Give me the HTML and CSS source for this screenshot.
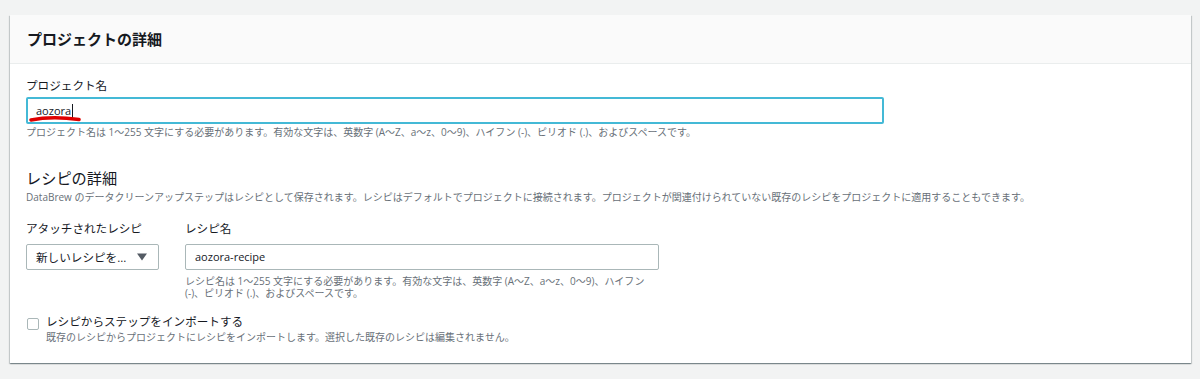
FILE: index.html
```html
<!DOCTYPE html>
<html lang="ja">
<head>
<meta charset="utf-8">
<link rel="stylesheet" href="styles.css">
</head>
<body>
<div class="page">
  <div class="card">
    <div class="card-header">
      <h2 class="card-title">プロジェクトの詳細</h2>
    </div>
    <div class="card-body">
      <div class="field">
        <label class="label">プロジェクト名</label>
        <div class="input input-focus input-wide">
          <span class="input-text">aozora</span><span class="caret"></span>
          <svg class="scribble" width="56" height="8" viewBox="0 0 56 8"><path d="M2 5 C 14 2.5, 32 2, 50 4.5" stroke="#e00000" stroke-width="3.5" fill="none" stroke-linecap="round"/></svg>
        </div>
        <p class="hint">プロジェクト名は 1～255 文字にする必要があります。有効な文字は、英数字 (A～Z、a～z、0～9)、ハイフン (-)、ピリオド (.)、およびスペースです。</p>
      </div>

      <h3 class="section-title">レシピの詳細</h3>
      <p class="desc">DataBrew のデータクリーンアップステップはレシピとして保存されます。レシピはデフォルトでプロジェクトに接続されます。プロジェクトが関連付けられていない既存のレシピをプロジェクトに適用することもできます。</p>

      <div class="row">
        <div class="col-select">
          <label class="label label-spaced">アタッチされたレシピ</label>
          <div class="select">
            <span>新しいレシピを...</span>
            <svg class="arrow" width="10" height="8" viewBox="0 0 10 8"><path d="M0 0.5 H10 L5 7.5 Z" fill="#545b64"/></svg>
          </div>
        </div>
        <div class="col-name">
          <label class="label label-spaced">レシピ名</label>
          <div class="input input-recipe"><span class="input-text">aozora-recipe</span></div>
          <p class="hint hint-narrow">レシピ名は 1～255 文字にする必要があります。有効な文字は、英数字 (A～Z、a～z、0～9)、ハイフン (-)、ピリオド (.)、およびスペースです。</p>
        </div>
      </div>

      <div class="check-row">
        <span class="checkbox"></span>
        <div class="check-text">
          <div class="check-label">レシピからステップをインポートする</div>
          <div class="check-desc">既存のレシピからプロジェクトにレシピをインポートします。選択した既存のレシピは編集されません。</div>
        </div>
      </div>
    </div>
  </div>
</div>
</body>
</html>
```
FILE: styles.css
```css
* { box-sizing: border-box; }
html, body { margin: 0; padding: 0; }
body {
  background: #f2f3f3;
  font-family: "Open Sans", "Noto Sans CJK JP", sans-serif;
  color: #16191f;
  width: 1200px;
  height: 379px;
  overflow: hidden;
}
.page {
  padding: 15px 9px 0 10px;
}
.card {
  background: #ffffff;
  box-shadow: 0 1px 1px 0 rgba(0,28,36,0.3), 1px 1px 1px 0 rgba(0,28,36,0.15), -1px 1px 1px 0 rgba(0,28,36,0.15);
  height: 348px;
}
.card-header {
  background: #fafafa;
  border-bottom: 1px solid #eaeded;
  height: 49px;
  display: flex;
  align-items: center;
  padding: 0 17px;
}
.card-title {
  margin: 0;
  font-size: 15px;
  font-weight: 700;
  color: #16191f;
  line-height: 20px;
}
.card-body {
  padding: 12px 17px 0 16px;
}
.label {
  display: block;
  font-size: 11.6px;
  line-height: 20px;
  color: #16191f;
  margin-bottom: 1px;
}
.label-spaced { margin-bottom: 5px; }
.input {
  position: relative;
  display: flex;
  align-items: center;
  height: 26px;
  border: 1px solid #aab7b8;
  border-radius: 2px;
  background: #fff;
  padding: 0 9px;
  font-size: 11px;
  color: #16191f;
}
.input-wide { width: 858px; height: 27px; }
.input-focus {
  border: 2px solid #44b9d6;
  padding-left: 8px;
}
.input-text { line-height: 16px; }
.caret {
  display: inline-block;
  width: 1px;
  height: 14px;
  background: #16191f;
  margin-left: 1px;
}
.scribble {
  position: absolute;
  left: 1px;
  top: 16px;
}
.hint {
  margin: 1px 0 0;
  font-size: 10px;
  line-height: 14px;
  color: #687078;
}
.section-title {
  margin: 28px 0 0;
  font-size: 15.2px;
  font-weight: 400;
  line-height: 22px;
  color: #16191f;
}
.desc {
  margin: 0;
  font-size: 10px;
  line-height: 16px;
  color: #687078;
}
.row {
  display: flex;
  gap: 26px;
  margin-top: 14px;
}
.col-select { width: 133px; }
.select {
  display: flex;
  align-items: center;
  justify-content: space-between;
  height: 26px;
  border: 1px solid #aab7b8;
  border-radius: 2px;
  padding: 0 11px 0 9px;
  font-size: 11.6px;
  color: #16191f;
  background: #fff;
}
.arrow { display: block; }
.col-name { width: 474px; }
.hint-narrow { margin-top: 5px; line-height: 12px; }
.check-row {
  display: flex;
  align-items: flex-start;
  gap: 7px;
  margin-top: 15px;
}
.checkbox {
  width: 12px;
  height: 12px;
  border: 1px solid #aab7b8;
  border-radius: 2px;
  margin-top: 4px;
  margin-left: 1px;
  flex: none;
}
.check-label {
  font-size: 11.6px;
  line-height: 16px;
  color: #16191f;
}
.check-desc {
  font-size: 10px;
  line-height: 14px;
  color: #687078;
}
```
